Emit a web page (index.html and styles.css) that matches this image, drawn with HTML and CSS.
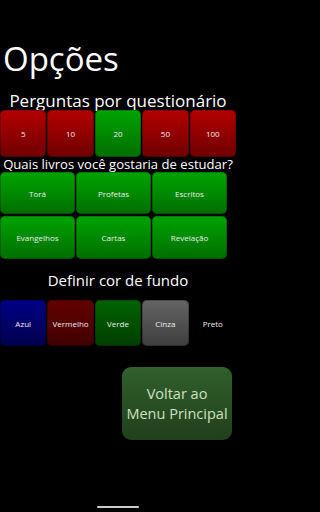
FILE: index.html
```html
<!DOCTYPE html>
<html lang="pt">
<head>
<meta charset="utf-8">
<link rel="stylesheet" href="styles.css">
</head>
<body>
<div class="screen">
  <h1 class="title">Opções</h1>
  <div class="label label-q">Perguntas por questionário</div>
  <div class="row5">
    <div class="btn red">5</div>
    <div class="btn red">10</div>
    <div class="btn green">20</div>
    <div class="btn red">50</div>
    <div class="btn red">100</div>
  </div>
  <div class="label label-b">Quais livros você gostaria de estudar?</div>
  <div class="books">
    <div class="btn green">Torá</div>
    <div class="btn green">Profetas</div>
    <div class="btn green">Escritos</div>
    <div class="btn green">Evangelhos</div>
    <div class="btn green">Cartas</div>
    <div class="btn green">Revelação</div>
  </div>
  <div class="label label-c">Definir cor de fundo</div>
  <div class="row5 colors">
    <div class="btn blue">Azul</div>
    <div class="btn dred">Vermelho</div>
    <div class="btn dgreen">Verde</div>
    <div class="btn gray">Cinza</div>
    <div class="btn black">Preto</div>
  </div>
  <div class="back-wrap">
    <div class="back">Voltar ao<br>Menu Principal</div>
  </div>
  <div class="nav"><div class="handle"></div></div>
</div>
</body>
</html>
```

FILE: styles.css
```css
html, body {
  margin: 0;
  padding: 0;
  background: #000;
}
.screen {
  width: 236px;
  height: 512px;
  background: #000;
  color: #fff;
  font-family: "Open Sans", "Noto Sans", sans-serif;
  display: flex;
  flex-direction: column;
  overflow: hidden;
}
.title {
  margin: 39px 0 0 3px;
  font-size: 33px;
  font-weight: 400;
  line-height: 40px;
  color: #fff;
}
.label {
  text-align: center;
  color: #fff;
  white-space: nowrap;
}
.label-q {
  margin-top: 13px;
  font-size: 17px;
  line-height: 18px;
}
.label-b {
  font-size: 13.1px;
  line-height: 15px;
}
.label-c {
  margin-top: 13px;
  font-size: 15px;
  line-height: 16px;
}
.row5 {
  display: grid;
  grid-template-columns: repeat(5, 1fr);
  gap: 1px;
  height: 47px;
}
.colors {
  margin-top: 12px;
  height: 46px;
}
.books {
  display: grid;
  grid-template-columns: repeat(3, 75px);
  grid-template-rows: 42px 43px;
  column-gap: 1px;
  row-gap: 2px;
  margin-top: 0;
}
.btn {
  display: flex;
  align-items: center;
  justify-content: center;
  border-radius: 5px;
  font-size: 8px;
  color: #eee;
  box-shadow: inset 0 0 0 1px rgba(0,0,0,0.25);
}
.red { background: linear-gradient(#b40000, #6e0000); }
.green { background: linear-gradient(#00a400, #006e00); }
.blue { background: linear-gradient(#000086, #00004c); }
.dred { background: linear-gradient(#640000, #400000); }
.dgreen { background: linear-gradient(#006400, #003e00); }
.gray { background: linear-gradient(#646464, #3e3e3e); }
.black { background: #000; box-shadow: none; }
.back-wrap {
  display: flex;
  justify-content: flex-end;
  padding-right: 4px;
  margin-top: 21px;
}
.back {
  width: 110px;
  height: 73px;
  border-radius: 9px;
  background: linear-gradient(#30602b, #213f1c);
  color: #cfe0c6;
  font-size: 14.5px;
  line-height: 20px;
  display: flex;
  align-items: center;
  justify-content: center;
  text-align: center;
}
.nav {
  margin-top: auto;
  height: 6px;
  display: flex;
  justify-content: center;
}
.handle {
  width: 42px;
  height: 2px;
  background: #ccc;
  border-radius: 1px;
}
```
